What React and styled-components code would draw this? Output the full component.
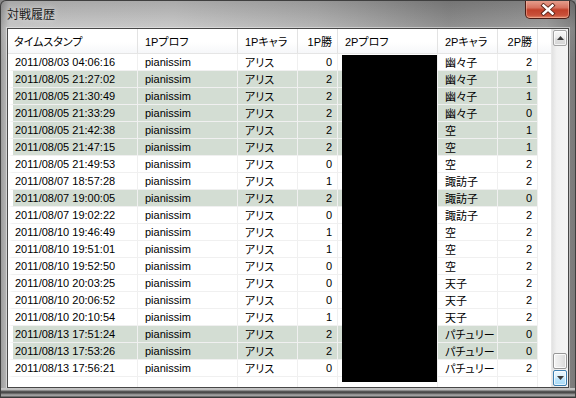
import React from "react";
import styled, { createGlobalStyle } from "styled-components";

const GlobalStyle = createGlobalStyle`
  html, body {
    margin: 0;
    padding: 0;
    background: #888;
  }
  * {
    box-sizing: border-box;
  }
`;

const cols = [
  { w: 130, align: "left" },
  { w: 100, align: "left" },
  { w: 60, align: "left" },
  { w: 40, align: "right" },
  { w: 100, align: "left" },
  { w: 60, align: "left" },
  { w: 40, align: "right" },
];

const headers = ["タイムスタンプ", "1Pプロフ", "1Pキャラ", "1P勝", "2Pプロフ", "2Pキャラ", "2P勝"];

const rows = [
  ["2011/08/03 04:06:16", "アリス", 0, "幽々子", 2],
  ["2011/08/05 21:27:02", "アリス", 2, "幽々子", 1],
  ["2011/08/05 21:30:49", "アリス", 2, "幽々子", 1],
  ["2011/08/05 21:33:29", "アリス", 2, "幽々子", 0],
  ["2011/08/05 21:42:38", "アリス", 2, "空", 1],
  ["2011/08/05 21:47:15", "アリス", 2, "空", 1],
  ["2011/08/05 21:49:53", "アリス", 0, "空", 2],
  ["2011/08/07 18:57:28", "アリス", 1, "諏訪子", 2],
  ["2011/08/07 19:00:05", "アリス", 2, "諏訪子", 0],
  ["2011/08/07 19:02:22", "アリス", 0, "諏訪子", 2],
  ["2011/08/10 19:46:49", "アリス", 1, "空", 2],
  ["2011/08/10 19:51:01", "アリス", 1, "空", 2],
  ["2011/08/10 19:52:50", "アリス", 0, "空", 2],
  ["2011/08/10 20:03:25", "アリス", 0, "天子", 2],
  ["2011/08/10 20:06:52", "アリス", 0, "天子", 2],
  ["2011/08/10 20:10:54", "アリス", 1, "天子", 2],
  ["2011/08/13 17:51:24", "アリス", 2, "パチュリー", 0],
  ["2011/08/13 17:53:26", "アリス", 2, "パチュリー", 0],
  ["2011/08/13 17:56:21", "アリス", 0, "パチュリー", 2],
];

const Window = styled.div`
  width: 576px;
  height: 398px;
  display: flex;
  flex-direction: column;
  padding: 0 6px;
  border: 1px solid #3f3f3f;
  border-bottom: none;
  border-radius: 6px 6px 0 0;
  background:
    linear-gradient(180deg, rgba(0, 0, 0, 0.14) 0px, rgba(255, 255, 255, 0.08) 28px, rgba(0, 0, 0, 0) 60px),
    linear-gradient(90deg, #9d9d9d 0px, #c4c4c4 8px, #c6c6c6 30%, #b0b0b0 55%, #888888 78%, #969696 95%, #7a7a7a 100%);
  font-family: "Liberation Sans", "Noto Sans CJK JP", sans-serif;
  overflow: hidden;
`;

const TitleBar = styled.div`
  height: 27px;
  display: flex;
  align-items: flex-start;
  justify-content: space-between;
`;

const Title = styled.span`
  font-family: "Noto Sans CJK JP", sans-serif;
  font-size: 12px;
  line-height: 14px;
  color: #1b1b1b;
  margin-top: 6px;
  text-shadow: 0 0 6px rgba(255, 255, 255, 0.7);
`;

const CloseButton = styled.div`
  width: 45px;
  height: 19px;
  margin-top: -1px;
  margin-right: -1px;
  display: flex;
  align-items: center;
  justify-content: center;
  border: 1px solid #4b1c14;
  border-top: none;
  border-radius: 0 0 5px 5px;
  background: linear-gradient(180deg, #e7a392 0%, #d77360 42%, #c1402a 55%, #c9513a 85%, #e08a6c 100%);
  box-shadow: inset 0 0 0 1px rgba(255, 200, 180, 0.45);
`;

const ListBox = styled.div`
  height: 360px;
  display: flex;
  border: 1px solid #474747;
  background: #fff;
  box-shadow: 0 0 0 1px rgba(235, 235, 235, 0.55);
`;

const GridArea = styled.div`
  position: relative;
  flex: 1;
  display: flex;
  flex-direction: column;
  overflow: hidden;
  font-size: 11px;
  color: #000;
`;

const HeaderRow = styled.div`
  display: flex;
  height: 25px;
  border-bottom: 1px solid #e5e5e5;
  background: linear-gradient(180deg, #ffffff 0%, #ffffff 55%, #f6f7f9 100%);
  flex-shrink: 0;
`;

const HeaderCell = styled.div`
  width: ${(p) => p.$w}px;
  flex-shrink: 0;
  display: flex;
  align-items: center;
  justify-content: ${(p) => (p.$align === "right" ? "flex-end" : "flex-start")};
  padding: 0 5px 0 ${(p) => (p.$first ? 6 : 7)}px;
  border-right: 1px solid #e3e3e3;
  font-feature-settings: "palt";
  white-space: nowrap;
`;

const Row = styled.div`
  display: flex;
  height: 17px;
  flex-shrink: 0;
`;

const Cell = styled.div`
  width: ${(p) => p.$w}px;
  flex-shrink: 0;
  display: flex;
  align-items: center;
  justify-content: ${(p) => (p.$align === "right" ? "flex-end" : "flex-start")};
  padding: 0 5px 0 ${(p) => (p.$first ? 2 : 7)}px;
  border-left: ${(p) => (p.$first ? "5px solid #fff" : "none")};
  border-right: 1px solid #f0f0f0;
  border-bottom: 1px solid #f0f0f0;
  background: ${(p) => (p.$win ? "#d3ddd3" : "#fff")};
  font-feature-settings: "palt";
  white-space: nowrap;
  overflow: hidden;
`;

const Redaction = styled.div`
  position: absolute;
  top: 26px;
  left: 334px;
  width: 95px;
  height: 327px;
  background: #000;
`;

const ScrollBar = styled.div`
  width: 17px;
  display: flex;
  flex-direction: column;
  padding: 1px;
  background: linear-gradient(90deg, #e2e2e2 0%, #f1f1f1 30%, #f4f4f4 100%);
  border-left: 1px solid #e8e8e8;
`;

const ArrowButton = styled.div`
  height: 16px;
  display: flex;
  align-items: center;
  justify-content: center;
  border: 1px solid ${(p) => (p.$hover ? "#3c7fb1" : "#a3a3a3")};
  border-radius: 2px;
  background: ${(p) =>
    p.$hover
      ? "linear-gradient(180deg, #eaf6fd 0%, #d9f0fc 45%, #bee6fd 55%, #a7d9f5 100%)"
      : "linear-gradient(180deg, #f7f7f7 0%, #ececec 45%, #dedede 55%, #d6d6d6 100%)"};
  box-shadow: inset 0 0 0 1px rgba(255, 255, 255, 0.7);
`;

const Track = styled.div`
  flex: 1;
  display: flex;
  flex-direction: column;
  justify-content: flex-end;
  padding-bottom: 1px;
`;

const Thumb = styled.div`
  height: 16px;
  border: 1px solid #979797;
  border-radius: 2px;
  background: linear-gradient(90deg, #f3f3f3 0%, #e8e8e8 50%, #d8d8d8 100%);
  box-shadow: inset 0 0 0 1px rgba(255, 255, 255, 0.8);
`;

const BottomEdge = styled.div`
  flex: 1;
  margin: 0 -6px;
  background: linear-gradient(
    180deg,
    #c7c7c7 0px,
    #bdbdbd 2px,
    #5c5c5c 3px,
    #454545 5px,
    #8c8c8c 6px,
    #a6a6a6 8px,
    #3a3a3a 9px
  );
`;

const Arrow = ({ down }) => (
  <svg width="7" height="4" viewBox="0 0 7 4">
    <path d={down ? "M0 0 L7 0 L3.5 4 Z" : "M0 4 L7 4 L3.5 0 Z"} fill="#3b3b3b" />
  </svg>
);

const CloseIcon = () => (
  <svg width="16" height="13" viewBox="0 0 16 13">
    <path d="M3.5 2.5 L12.5 10.5 M12.5 2.5 L3.5 10.5" stroke="#5a2418" strokeWidth="4.2" strokeLinecap="square" />
    <path d="M3.5 2.5 L12.5 10.5 M12.5 2.5 L3.5 10.5" stroke="#ffffff" strokeWidth="2.4" strokeLinecap="square" />
  </svg>
);

const App = () => {
  return (
    <>
      <GlobalStyle />
      <Window>
        <TitleBar>
          <Title>対戦履歴</Title>
          <CloseButton>
            <CloseIcon />
          </CloseButton>
        </TitleBar>
        <ListBox>
          <GridArea>
            <HeaderRow>
              {headers.map((h, i) => (
                <HeaderCell key={h} $w={cols[i].w} $align={cols[i].align} $first={i === 0}>
                  {h}
                </HeaderCell>
              ))}
            </HeaderRow>
            {rows.map((r) => {
              const win = r[2] === 2;
              const values = [r[0], "pianissim", r[1], r[2], "", r[3], r[4]];
              return (
                <Row key={r[0]}>
                  {values.map((v, i) => (
                    <Cell key={i} $w={cols[i].w} $align={cols[i].align} $first={i === 0} $win={win}>
                      {v}
                    </Cell>
                  ))}
                </Row>
              );
            })}
            <Row>
              {cols.map((c, i) => (
                <Cell key={i} $w={c.w} $align={c.align} $first={i === 0} />
              ))}
            </Row>
            <Redaction />
          </GridArea>
          <ScrollBar>
            <ArrowButton>
              <Arrow />
            </ArrowButton>
            <Track>
              <Thumb />
            </Track>
            <ArrowButton $hover>
              <Arrow down />
            </ArrowButton>
          </ScrollBar>
        </ListBox>
        <BottomEdge />
      </Window>
    </>
  );
};

export default App;
